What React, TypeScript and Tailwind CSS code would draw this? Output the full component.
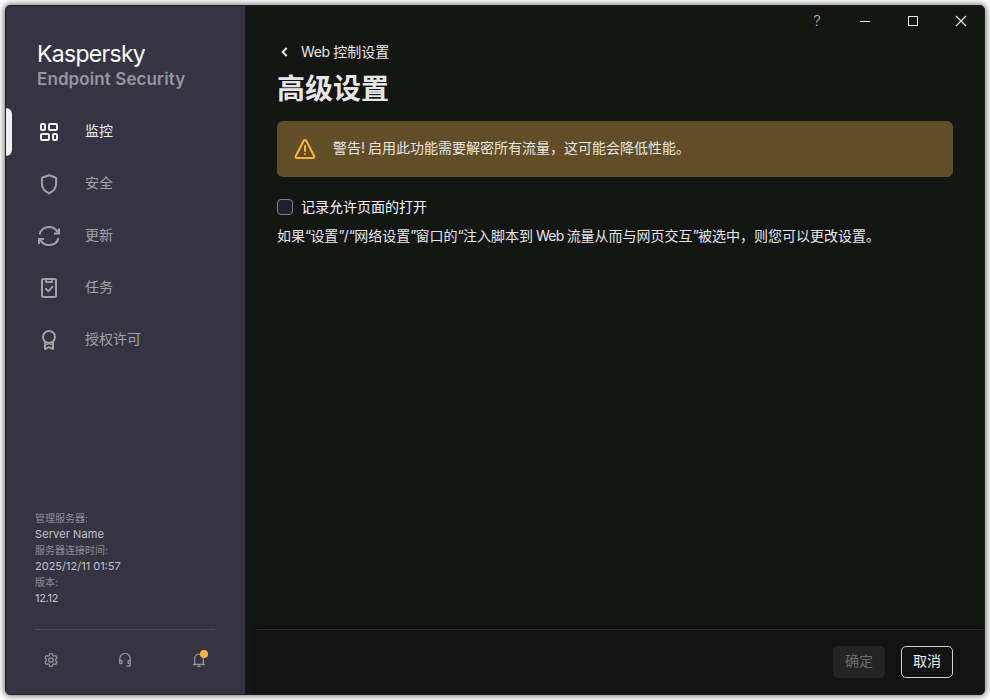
import React from 'react';

const stroke = {
  fill: 'none',
  stroke: 'currentColor',
  strokeWidth: 2,
  strokeLinecap: 'round' as const,
  strokeLinejoin: 'round' as const,
};

function DashboardIcon() {
  return (
    <svg width="24" height="24" viewBox="0 0 24 24" {...stroke}>
      <rect x="4" y="4" width="4" height="6" rx="1" />
      <rect x="12" y="4" width="8" height="6" rx="1" />
      <rect x="4" y="14" width="8" height="6" rx="1" />
      <rect x="16" y="14" width="4" height="6" rx="1" />
    </svg>
  );
}

function ShieldIcon() {
  return (
    <svg width="24" height="24" viewBox="0 0 24 24" {...stroke}>
      <path d="M12 3.200 19.100 5.800v5.700c0 4.800-3.200 8.100-7.100 9.700-3.900-1.600-7.100-4.900-7.100-9.700V5.800Z" />
    </svg>
  );
}

function RefreshIcon() {
  return (
    <svg width="24" height="24" viewBox="0 0 24 24" {...stroke} strokeLinecap="butt" strokeLinejoin="miter">
      <path d="M2.600 10.500C3.500 6 7.300 3 12 3c3.900 0 6.900 1.900 8.800 5.400" />
      <path d="M22 4.500V9.500h-5" />
      <path d="M21.400 14c-.9 4.500-4.700 7-9.400 7-3.900 0-6.900-1.800-8.800-5.300" />
      <path d="M2 20v-5h5" />
    </svg>
  );
}

function TaskIcon() {
  return (
    <svg width="24" height="24" viewBox="0 0 24 24" {...stroke}>
      <rect x="5" y="3" width="14" height="18" rx="1.500" />
      <path d="M9 3.500v2.700h6V3.500" strokeWidth="1.700" />
      <path d="m9 13 2.300 2.300 4-4.500" />
    </svg>
  );
}

function LicenseIcon() {
  return (
    <svg width="24" height="24" viewBox="0 0 24 24" {...stroke}>
      <circle cx="12" cy="9" r="6" />
      <path d="M8 14.500V21l4-1.800 4 1.800v-6.500" />
      <path d="m8.500 17 3.500-1.200 3.500 1.200" strokeWidth="1.200" />
    </svg>
  );
}

function GearIcon() {
  return (
    <svg width="16" height="16" viewBox="0 0 16 16" {...stroke} strokeWidth={1.300}>
      <path d="M6.700 1.700h2.600l.5 1.800 1.100.65 1.850-.5 1.300 2.250L12.700 7.300v1.400l1.350 1.400-1.300 2.250-1.850-.5-1.100.65-.5 1.800H6.700l-.5-1.800-1.100-.65-1.850.5-1.300-2.250L3.300 8.700V7.300L1.950 5.900l1.300-2.250 1.850.5 1.100-.65Z" />
      <circle cx="8" cy="8" r="2.200" />
    </svg>
  );
}

function HeadsetIcon() {
  return (
    <svg width="16" height="16" viewBox="0 0 16 16" {...stroke} strokeWidth={1.300}>
      <path d="M2.700 10V6.700a5.300 5.300 0 0 1 10.600 0v5.600c0 1.300-.8 1.900-2.100 1.900H9.600" />
      <path d="M2.700 8.200h1a1.200 1.200 0 0 1 1.200 1.200v1.200a1.200 1.200 0 0 1-2.200.6Zm10.600 0h-1a1.200 1.200 0 0 0-1.200 1.200v1.200a1.200 1.200 0 0 0 2.200.6Z" />
    </svg>
  );
}

function BellIcon() {
  return (
    <svg width="16" height="16" viewBox="0 0 16 16" {...stroke} strokeWidth={1.300}>
      <path d="M2.500 12.500h11M3.700 12.300V6.500a4.300 4.300 0 0 1 8.600 0v5.800M7 14.500h2" />
    </svg>
  );
}

const navItems = [
  { label: '监控', Icon: DashboardIcon, active: true },
  { label: '安全', Icon: ShieldIcon, active: false },
  { label: '更新', Icon: RefreshIcon, active: false },
  { label: '任务', Icon: TaskIcon, active: false },
  { label: '授权许可', Icon: LicenseIcon, active: false },
];

function Sidebar() {
  return (
    <aside className="flex w-[239px] shrink-0 flex-col bg-[#363443]">
      <header className="h-[102px] pl-[31px] pt-[35px]">
        <div className="h-[26px] text-[23px] leading-[26px] tracking-[-0.7px] text-white">Kaspersky</div>
        <div className="h-[24px] text-[17px] font-semibold leading-[24px] tracking-[0.1px] text-[#96959d]">Endpoint Security</div>
      </header>
      <nav className="flex flex-col gap-1">
        {navItems.map(({ label, Icon, active }) => (
          <div
            key={label}
            className={active ? 'flex h-12 items-center text-[#efeff0]' : 'flex h-12 items-center text-[#a2a1a7]'}
          >
            <span className={active ? 'h-12 w-[6px] rounded-r-[6px] bg-[#efefef]' : 'h-12 w-[6px]'} />
            <span className="ml-[25px] w-12">
              <Icon />
            </span>
            <span className="pb-[2px] text-[14px] leading-5">{label}</span>
          </div>
        ))}
      </nav>
      <dl className="mt-auto pl-[29px] text-[11px] leading-4 text-[#c3c2c8]">
        <dt className="text-[10px] text-[#8e8d96]">管理服务器:</dt>
        <dd className="tracking-[0.1px]">Server Name</dd>
        <dt className="text-[10px] text-[#8e8d96]">服务器连接时间:</dt>
        <dd>2025/12/11 01:57</dd>
        <dt className="text-[10px] text-[#8e8d96]">版本:</dt>
        <dd className="tracking-[-0.3px]">12.12</dd>
      </dl>
      <footer className="ml-[29px] mr-[30px] mt-[23px] flex h-[65px] justify-between border-t border-[#4c4a59] px-2 pt-[22px] text-[#929199]">
        <GearIcon />
        <HeadsetIcon />
        <span className="relative h-4 w-4">
          <BellIcon />
          <span className="absolute -top-[2px] left-[9px] h-2 w-2 rounded-full bg-[#fab33e]" />
        </span>
      </footer>
    </aside>
  );
}

function WindowControls() {
  return (
    <div className="-mr-px flex h-[30px] justify-end text-[#e8e8e8]">
      <span className="flex w-12 items-center justify-center text-[15px] font-light text-[#b5b5b5]">?</span>
      <span className="flex w-12 items-center justify-center">
        <span className="mt-px h-px w-[10px] bg-[#e8e8e8]" />
      </span>
      <span className="flex w-12 items-center justify-center">
        <span className="h-[10px] w-[10px] border border-[#e8e8e8]" />
      </span>
      <span className="flex w-12 items-center justify-center">
        <svg width="12" height="12" viewBox="0 0 12 12" stroke="currentColor" strokeWidth="1.100">
          <path d="m1 1 10 10M11 1 1 11" />
        </svg>
      </span>
    </div>
  );
}

function Quoted({ children }: { children: React.ReactNode }) {
  return (
    <>
      <span className="tracking-[-0.8px]">“</span>
      {children}
      <span className="tracking-[-0.8px]">”</span>
    </>
  );
}

export default function App() {
  return (
    <div className="h-[700px] w-[990px] overflow-hidden bg-white p-[5px] font-['Inter','Noto_Sans_CJK_SC',sans-serif]">
      <div className="flex h-[690px] w-[980px] overflow-hidden rounded-[5px] border border-[#202020] bg-[#141614] shadow-[0_0_6px_1px_rgba(0,0,0,0.55)]">
        <Sidebar />
        <main className="flex min-w-0 flex-1 flex-col">
          <WindowControls />
          <section className="flex-1 pl-8 pr-[31px] pt-[2px]">
            <div className="flex h-7 items-center text-[14px] text-[#e6e6e6]">
              <svg className="mr-2" width="16" height="16" viewBox="0 0 16 16" fill="none" stroke="currentColor" strokeWidth="2">
                <path d="M9.700 4 5.700 8l4 4" />
              </svg>
              <span className="pb-[2px]">
                <span className="tracking-[-0.4px]">Web </span>控制设置
              </span>
            </div>
            <h1 className="mt-[2px] h-[42px] text-[28px] font-bold leading-[42px] text-[#e6e6e6]">高级设置</h1>
            <div className="mt-[11px] flex h-14 items-center rounded-[6px] bg-[#614d28] pl-4 text-[14px] text-[#e8e6e1]">
              <svg className="mr-4 text-[#fab33e]" width="24" height="24" viewBox="0 0 24 24" {...stroke}>
                <path d="M10.700 3.800 2.800 19c-.5 1 .1 2 1.200 2h16c1.100 0 1.700-1 1.200-2L13.300 3.800c-.5-1-2.100-1-2.600 0Z" />
                <path d="M12 9v5m0 3v.1" />
              </svg>
              <span className="pb-1">
                警告<span className="tracking-[-0.5px]">! </span>启用此功能需要解密所有流量，这可能会降低性能。
              </span>
            </div>
            <label className="mt-5 flex h-5 items-center text-[14px] text-[#fafafa]">
              <span className="mr-2 h-4 w-4 rounded-[4px] border border-[#7f7d8b] bg-[#211f2b]" />
              <span className="pb-[2px]">记录允许页面的打开</span>
            </label>
            <p className="mt-[9px] whitespace-nowrap text-[14px] leading-5 text-[#e6e6e6]">
              如果<Quoted>设置</Quoted>/<Quoted>网络设置</Quoted>窗口的
              <Quoted>
                注入脚本到<span className="tracking-[-0.8px]"> Web </span>流量从而与网页交互
              </Quoted>
              被选中，则您可以更改设置。
            </p>
          </section>
          <footer className="ml-[11px] flex h-[65px] items-center justify-end gap-4 border-t border-[#292d2a] bg-[#131313] pr-[31px] text-[14px] shadow-[0_-2px_4px_rgba(0,0,0,0.35)]">
            <button className="h-8 w-[52px] rounded-[5px] bg-[#242424] pb-[3px] text-[#6c6c6c]">确定</button>
            <button className="h-8 w-[52px] rounded-[5px] border border-[#d0d0d0] pb-[3px] text-[#efefef]">取消</button>
          </footer>
        </main>
      </div>
    </div>
  );
}
